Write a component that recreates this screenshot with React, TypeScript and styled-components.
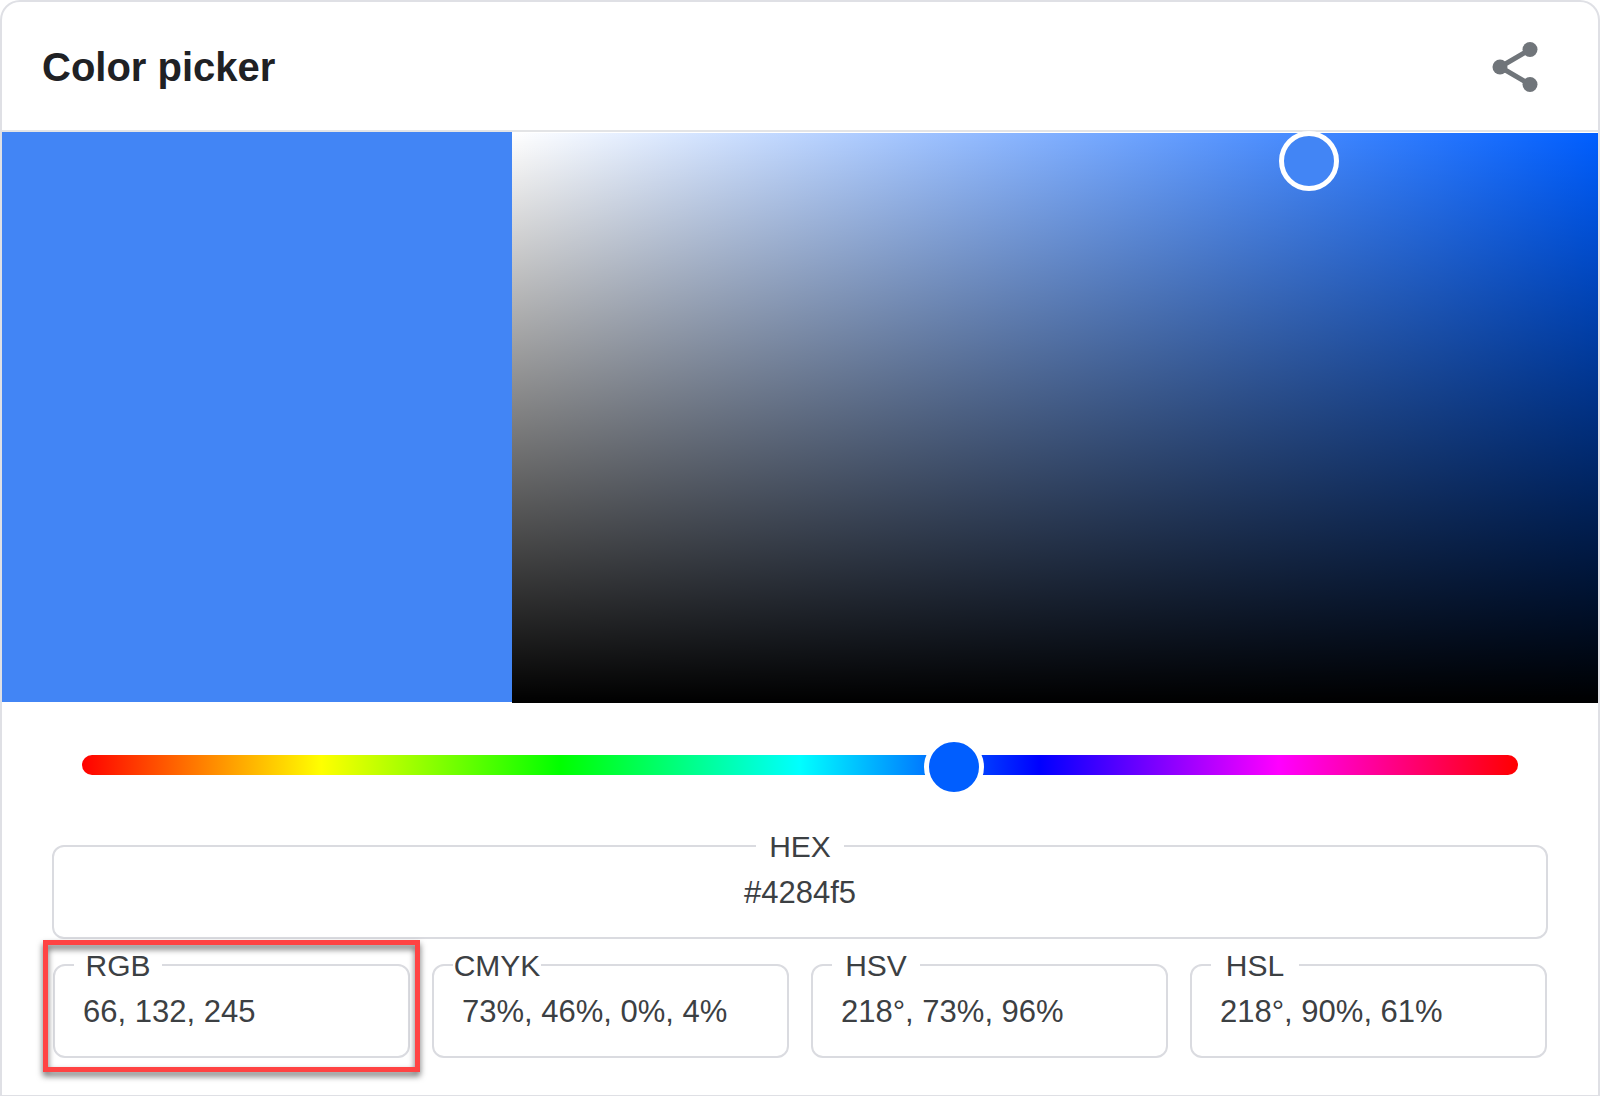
import React, { useState } from "react";
import styled, { createGlobalStyle, css } from "styled-components";

const GlobalStyle = createGlobalStyle`
  *, *::before, *::after { box-sizing: border-box; }
  body {
    margin: 0;
    background: #fff;
    font-family: "Liberation Sans", Arial, sans-serif;
  }
`;

const Card = styled.main`
  border: 2px solid #dfe0e5;
  border-bottom-width: 1px;
  border-radius: 20px 20px 0 0;
  background: #fff;
`;

const Header = styled.header`
  display: flex;
  align-items: center;
  justify-content: space-between;
  height: 130px;
  padding: 2px 53px 0 40px;
  border-bottom: 2px solid #e3e4e6;
`;

const Title = styled.h1`
  margin: 0;
  font-size: 40px;
  line-height: 48px;
  font-weight: 700;
  color: #202124;
`;

const ShareButton = styled.button`
  display: flex;
  padding: 0;
  border: 0;
  background: none;
  color: #70757a;
  cursor: pointer;
`;

const PickerRow = styled.section`
  display: grid;
  grid-template-columns: 510fr 1086fr;
  align-items: start;
`;

const Swatch = styled.div`
  height: 570px;
  background: #4285f5;
`;

const ShadeField = styled.div`
  position: relative;
  height: 570px;
  margin-top: 1px;
  background:
    linear-gradient(to top, #000, rgba(0, 0, 0, 0)),
    linear-gradient(to right, #fff, #005eff);
`;

const knob = css`
  width: 60px;
  height: 60px;
  border: 5px solid #fff;
  border-radius: 50%;
  cursor: pointer;
`;

const ShadeMarker = styled.button`
  ${knob}
  position: absolute;
  padding: 0;
  transform: translate(-50%, -50%);
  background: #4285f5;
`;

const HueSection = styled.section`
  padding: 52px 80px 0;
`;

const HueTrack = styled.div`
  height: 20px;
  border-radius: 10px;
  background: linear-gradient(to right, #f00, #ff0, #0f0, #0ff, #00f, #f0f, #f00);
`;

const HueInput = styled.input`
  appearance: none;
  display: block;
  width: calc(100% + 60px);
  height: 60px;
  margin: 0 -30px;
  background: transparent;
  transform: translateY(-18px);

  &::-webkit-slider-thumb {
    appearance: none;
    ${knob}
    background: #005eff;
  }

  &::-moz-range-thumb {
    ${knob}
    background: #005eff;
  }
`;

const Values = styled.section`
  display: flex;
  flex-direction: column;
  gap: 25px;
  padding: 70px 50px 37px;
`;

const ValueGrid = styled.div`
  display: grid;
  grid-template-columns: repeat(4, minmax(0, 1fr));
  gap: 22px;
  padding: 0 1px;
`;

const Field = styled.div`
  position: relative;
  padding: 26px 0 24px;
  border: 2px solid #dadbe0;
  border-radius: 12px;
`;

const FieldLabel = styled.label<{ $centered?: boolean }>`
  position: absolute;
  top: -17px;
  left: ${(p) => (p.$centered ? "calc(50% - 44px)" : "19px")};
  width: 88px;
  background: #fff;
  color: #3c4043;
  font-size: 30px;
  line-height: 34px;
  text-align: center;
`;

const FieldInput = styled.input<{ $centered?: boolean }>`
  display: block;
  width: 100%;
  height: 40px;
  padding: ${(p) => (p.$centered ? "0" : "0 0 0 28px")};
  border: 0;
  outline: 0;
  background: transparent;
  color: #3c4043;
  font-family: inherit;
  font-size: 31px;
  line-height: 40px;
  text-align: ${(p) => (p.$centered ? "center" : "left")};
`;

const Highlight = styled.div`
  position: absolute;
  inset: -26px -12px -16px;
  border: 5px solid #ff4343;
  filter: drop-shadow(0 4px 3px rgba(0, 0, 0, 0.6));
  pointer-events: none;
`;

function ShareIcon() {
  return (
    <svg width="60" height="60" viewBox="0 0 24 24" fill="currentColor" aria-hidden="true">
      <path d="M18 5 6 12l12 7" fill="none" stroke="currentColor" strokeWidth="2" />
      <circle cx="18" cy="5" r="3" />
      <circle cx="6" cy="12" r="3" />
      <circle cx="18" cy="19" r="3" />
    </svg>
  );
}

interface ValueFieldProps {
  id: string;
  label: string;
  value: string;
  centered?: boolean;
  highlighted?: boolean;
}

function ValueField({ id, label, value, centered, highlighted }: ValueFieldProps) {
  return (
    <Field>
      <FieldLabel htmlFor={id} $centered={centered}>
        {label}
      </FieldLabel>
      <FieldInput id={id} type="text" defaultValue={value} spellCheck={false} $centered={centered} />
      {highlighted && <Highlight />}
    </Field>
  );
}

const formats: ValueFieldProps[] = [
  { id: "rgb", label: "RGB", value: "66, 132, 245", highlighted: true },
  { id: "cmyk", label: "CMYK", value: "73%, 46%, 0%, 4%" },
  { id: "hsv", label: "HSV", value: "218°, 73%, 96%" },
  { id: "hsl", label: "HSL", value: "218°, 90%, 61%" },
];

const shade = { saturation: 73.4, brightness: 95.1 };

export default function App() {
  const [hue, setHue] = useState(218);

  return (
    <>
      <GlobalStyle />
      <Card>
        <Header>
          <Title>Color picker</Title>
          <ShareButton type="button" aria-label="Share">
            <ShareIcon />
          </ShareButton>
        </Header>
        <PickerRow>
          <Swatch />
          <ShadeField>
            <ShadeMarker
              type="button"
              aria-label="Shade"
              style={{ left: `${shade.saturation}%`, top: `${100 - shade.brightness}%` }}
            />
          </ShadeField>
        </PickerRow>
        <HueSection>
          <HueTrack>
            <HueInput
              type="range"
              aria-label="Hue"
              min={0}
              max={359}
              value={hue}
              onChange={(e) => setHue(Number(e.target.value))}
            />
          </HueTrack>
        </HueSection>
        <Values>
          <ValueField id="hex" label="HEX" value="#4284f5" centered />
          <ValueGrid>
            {formats.map((format) => (
              <ValueField key={format.id} {...format} />
            ))}
          </ValueGrid>
        </Values>
      </Card>
    </>
  );
}
